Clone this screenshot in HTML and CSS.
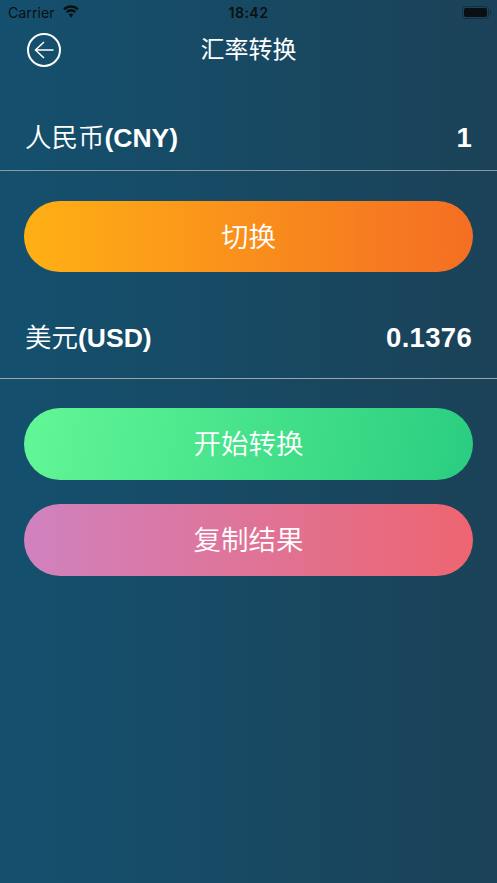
FILE: index.html
```html
<!DOCTYPE html>
<html lang="zh">
<head>
<meta charset="utf-8">
<title>汇率转换</title>
<link rel="stylesheet" href="styles.css">
</head>
<body>
<div class="screen">
  <div class="status">
    <div class="status-left">
      <span>Carrier</span>
      <svg class="wifi" width="18" height="13" viewBox="0 0 18 13"><path d="M9 2.800c2.400 0 4.500.9 6.100 2.400l1.700-1.800A11.400 11.400 0 0 0 9 .2 11.400 11.400 0 0 0 1.200 3.400l1.700 1.800A8.900 8.900 0 0 1 9 2.800z" fill="#0a0f14"/><path d="M9 6.700c1.300 0 2.500.5 3.400 1.300l1.700-1.800A7.500 7.500 0 0 0 9 4.100a7.500 7.500 0 0 0-5.100 2.100L5.600 8c.9-.8 2.100-1.300 3.400-1.300z" fill="#0a0f14"/><path d="M9 8.400c-.9 0-1.700.3-2.300.9L9 12.800l2.300-3.500c-.6-.6-1.400-.9-2.300-.9z" fill="#0a0f14"/></svg>
    </div>
    <span class="time">18:42</span>
    <div class="battery"><div class="battery-fill"></div></div>
  </div>
  <div class="nav">
    <svg class="back" width="36" height="36" viewBox="0 0 36 36" fill="none" stroke="#fff" stroke-width="2"><circle cx="18" cy="18" r="16"/><path d="M27.500 18H9.500M18 10 9.500 18l8.500 8" stroke-width="1.500"/></svg>
    <h1 class="title">汇率转换</h1>
  </div>
  <div class="row row-from">
    <span class="cur">人民币<b>(CNY)</b></span>
    <b class="val">1</b>
  </div>
  <div class="btn btn-orange">切换</div>
  <div class="row row-to">
    <span class="cur">美元<b>(USD)</b></span>
    <b class="val">0.1376</b>
  </div>
  <div class="btn btn-green">开始转换</div>
  <div class="btn btn-pink">复制结果</div>
</div>
</body>
</html>
```
FILE: styles.css
```css
* { box-sizing: border-box; }
html, body { margin: 0; padding: 0; }
body {
  width: 497px;
  height: 883px;
  overflow: hidden;
  font-family: "Liberation Sans", "Noto Sans CJK SC", sans-serif;
  color: #fff;
}
.screen {
  width: 497px;
  height: 883px;
  background: linear-gradient(90deg, #14506e 0%, #1b4258 100%);
  display: flex;
  flex-direction: column;
}
.status {
  height: 27px;
  padding: 0 8px 2px 8px;
  display: flex;
  align-items: center;
  justify-content: space-between;
  position: relative;
  color: #0a0f14;
  font-family: Inter, "Liberation Sans", sans-serif;
  font-size: 14.200px;
}
.status-left { display: flex; align-items: center; gap: 7px; }
.wifi { margin-top: -2px; }
.time {
  position: absolute;
  left: 0;
  right: 0;
  text-align: center;
  font-weight: 600;
  letter-spacing: .4px;
}
.battery {
  width: 27px;
  height: 13px;
  border: 1px solid rgba(10, 15, 20, .35);
  border-radius: 3.500px;
  padding: 1px;
  position: relative;
}
.battery::after {
  content: "";
  position: absolute;
  right: -3px;
  top: 3px;
  width: 1.500px;
  height: 5px;
  background: rgba(10, 15, 20, .35);
  border-radius: 0 1px 1px 0;
}
.battery-fill { width: 100%; height: 100%; background: #0a0f14; border-radius: 2px; }
.nav {
  height: 46px;
  position: relative;
  display: flex;
  align-items: center;
  justify-content: center;
}
.back { position: absolute; left: 25.500px; top: 5px; }
.title { margin: 0; font-size: 24px; font-weight: 400; line-height: 46px; }
.row {
  display: flex;
  justify-content: space-between;
  align-items: baseline;
  padding: 0 25px 0 25px;
  border-bottom: 1px solid #8a9aa3;
  font-size: 26.500px;
  font-weight: 350;
  line-height: 36px;
}
.row-from { height: 98px; padding-top: 47px; margin-bottom: 30px; }
.row-to { height: 107px; padding-top: 48px; margin-bottom: 29px; border-bottom-color: #9ba6ac; }
.cur b, .val { font-weight: 700; }
.val { font-size: 27.500px; letter-spacing: .3px; }
.btn {
  height: 72px;
  margin: 0 24px 24px 24px;
  border-radius: 36px;
  font-size: 27.500px;
  font-weight: 350;
  line-height: 73px;
  text-align: center;
  flex: none;
}
.btn-orange { background: linear-gradient(90deg, #ffb014 0%, #f46e23 100%); margin-bottom: 0; height: 71px; }
.btn-green { background: linear-gradient(100deg, #62f796 0%, #2acd80 100%); }
.btn-pink { background: linear-gradient(90deg, #d082bf 0%, #ee6570 100%); }
```
